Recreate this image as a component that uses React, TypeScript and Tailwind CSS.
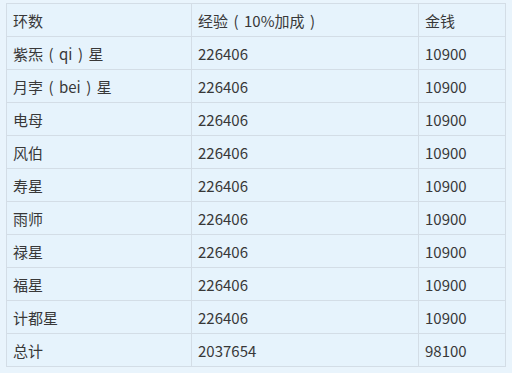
function P({ c }: { c: string }) {
  return <span className="inline-block w-[16px] text-center">{c}</span>;
}

const rows: [React.ReactNode, string, string][] = [
  [<>紫炁<P c="(" />qi<P c=")" />星</>, "226406", "10900"],
  [<>月孛<P c="(" />bei<P c=")" />星</>, "226406", "10900"],
  ["电母", "226406", "10900"],
  ["风伯", "226406", "10900"],
  ["寿星", "226406", "10900"],
  ["雨师", "226406", "10900"],
  ["禄星", "226406", "10900"],
  ["福星", "226406", "10900"],
  ["计都星", "226406", "10900"],
  ["总计", "2037654", "98100"],
];

function Cell({ children }: { children: React.ReactNode }) {
  return (
    <td className="h-[33px] border border-[#d3dde6] pl-[6px] pr-1 pt-[2px] align-middle whitespace-nowrap">
      {children}
    </td>
  );
}

export default function App() {
  return (
    <div className="h-[373px] w-[512px] bg-[#e9f4fc] pl-[6px] pt-[3px] font-['Noto_Sans_CJK_SC',sans-serif] text-[15px] text-[#383838]">
      <table className="w-[499px] table-fixed border-collapse bg-[#e6f3fc]">
        <colgroup>
          <col className="w-[185px]" />
          <col className="w-[227px]" />
          <col className="w-[87px]" />
        </colgroup>
        <tbody>
          <tr>
            <Cell>环数</Cell>
            <Cell>
              经验<P c="(" />10%加成<P c=")" />
            </Cell>
            <Cell>金钱</Cell>
          </tr>
          {rows.map((r, i) => (
            <tr key={i}>
              <Cell>{r[0]}</Cell>
              <Cell>{r[1]}</Cell>
              <Cell>{r[2]}</Cell>
            </tr>
          ))}
        </tbody>
      </table>
    </div>
  );
}
